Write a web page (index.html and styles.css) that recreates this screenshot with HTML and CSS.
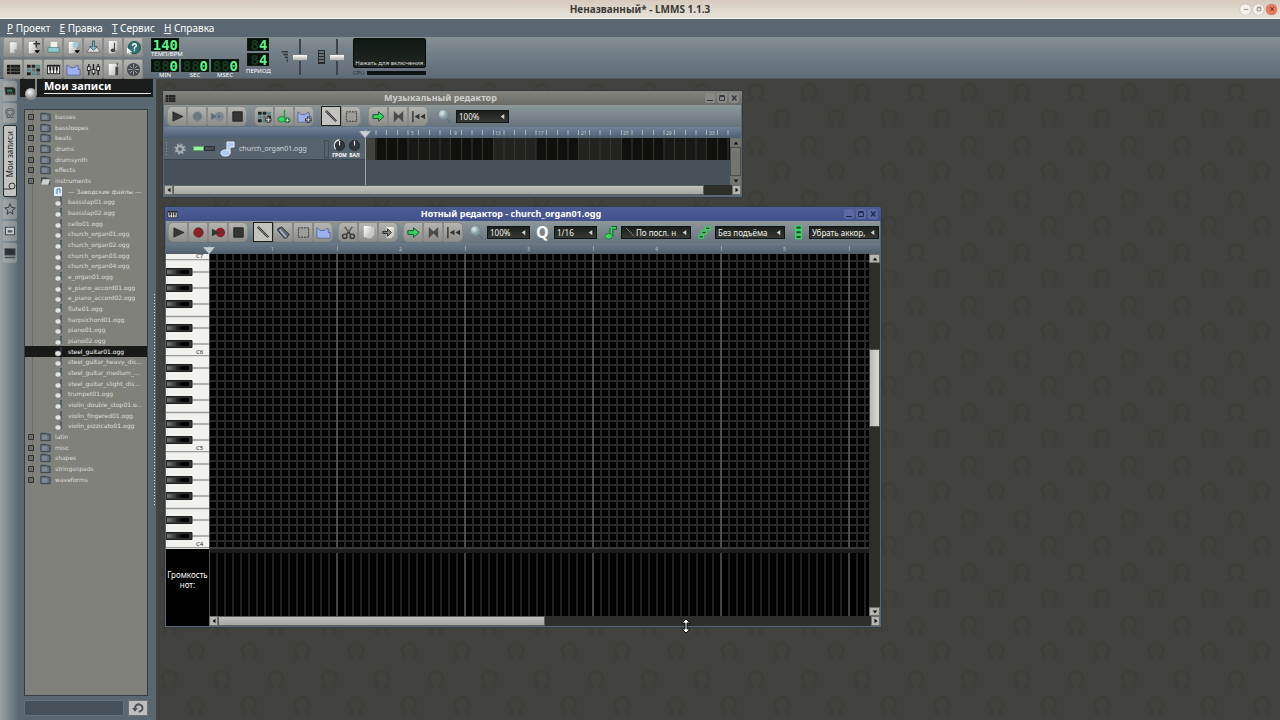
FILE: index.html
```html
<!DOCTYPE html>
<html lang="ru">
<head>
<meta charset="utf-8">
<title>Неназванный* - LMMS 1.1.3</title>
<link rel="stylesheet" href="styles.css">
</head>
<body>
<svg class="defs" aria-hidden="true">
  <defs>
    <linearGradient id="gPage" x1="0" y1="0" x2="1" y2="1"><stop offset="0" stop-color="#fff"/><stop offset="1" stop-color="#b9bab4"/></linearGradient>
    <linearGradient id="gKey"><stop offset="0" stop-color="#777"/><stop offset=".7" stop-color="#000"/></linearGradient>
    <radialGradient id="gLens" cx=".35" cy=".35"><stop offset="0" stop-color="#e4efee"/><stop offset="1" stop-color="#7d979d"/></radialGradient>
    <radialGradient id="gHead" cx=".4" cy=".35"><stop offset="0" stop-color="#fff"/><stop offset="1" stop-color="#8b8c8c"/></radialGradient>
    <symbol id="page" viewBox="0 0 16 16"><path d="M4 2h8v8l-3 4H4z" fill="url(#gPage)" stroke="#8b8c87" stroke-width=".5"/><path d="M12 10H9v4z" fill="#999"/></symbol>
    <symbol id="pageplus" viewBox="0 0 16 16"><path d="M3 2h8v8l-3 4H3z" fill="url(#gPage)"/><path d="M11 1v7M8 4h7" stroke="#333" stroke-width="1.6"/><path d="M9 11h6l-3 3z" fill="#000"/></symbol>
    <symbol id="open" viewBox="0 0 16 16"><path d="M5 2h7v8H5z" fill="#f1f1ee"/><path d="M2 8h12v5H2z" fill="#8fc9c9" stroke="#46777a" stroke-width=".7"/></symbol>
    <symbol id="recent" viewBox="0 0 16 16"><path d="M3 2h8v8l-3 4H3z" fill="url(#gPage)"/><circle cx="10" cy="5" r="3" fill="#9dd0d5"/><path d="M9 11h6l-3 3z" fill="#000"/></symbol>
    <symbol id="save" viewBox="0 0 16 16"><path d="M4 8h8l3 5H1z" fill="#ddd" stroke="#555" stroke-width=".7"/><path d="M7 1h2v6h3l-4 4-4-4h3z" fill="#8ab4c6" stroke="#24536a" stroke-width=".8"/></symbol>
    <symbol id="exportp" viewBox="0 0 16 16"><path d="M3 1h9v9l-3 4H3z" fill="url(#gPage)"/><path d="M9 3v8" stroke="#333"/><ellipse cx="7.500" cy="11" rx="2.500" ry="2" fill="#444"/></symbol>
    <symbol id="help" viewBox="0 0 16 16"><circle cx="9" cy="8" r="6.500" fill="#2b7272" stroke="#174a4b"/><path d="M7 6q0-2 2-2t2 2q0 1-2 2v2M9 11v1" fill="none" stroke="#fff" stroke-width="1.500"/><path d="M1 8v7l2-2 1 3 1-1-1-2h3z" fill="#fff"/></symbol>
    <symbol id="song" viewBox="0 0 16 16"><path d="M1 3h14v10H1z" fill="#171817"/><path d="M1 6.500h14M1 10h14M5 3v10" stroke="#767975" stroke-width=".8"/><path d="M9 3v10M12 3v10" stroke="#3e413f" stroke-width=".6"/></symbol>
    <symbol id="bb" viewBox="0 0 16 16"><g fill="#202223"><path d="M1 3h4v3H1zM6 3h4v3H6zM11 7h4v3h-4zM1 11h4v3H1z"/></g><g fill="#4d8d8e"><path d="M11 3h4v3h-4zM1 7h4v3H1zM6 11h4v3H6z"/></g><path d="M6 7h4v3H6zM11 11h4v3h-4z" fill="#687171"/></symbol>
    <symbol id="bbplus" viewBox="0 0 16 16"><use href="#bb"/><path d="M12 8v7M8.500 11.500h7" stroke="#333" stroke-width="3"/><path d="M12 9v5M9.500 11.500h5" stroke="#ddd" stroke-width="1.200"/></symbol>
    <symbol id="piano" viewBox="0 0 16 16"><path d="M1 3h14v10H1z" fill="#222"/><path d="M2 5h12v7H2z" fill="#eee"/><path d="M4.500 5v7M8 5v7M11.500 5v7" stroke="#222"/><path d="M4.500 5v4M8 5v4M11.500 5v4" stroke="#222" stroke-width="2"/></symbol>
    <symbol id="auto" viewBox="0 0 16 16"><path d="M1 3l4 3h4l2-2h2v4h2v6H1z" fill="#a0b0ee" stroke="#4a5c9c" stroke-width=".8"/></symbol>
    <symbol id="autoplus" viewBox="0 0 16 16"><use href="#auto"/><path d="M12 8v7M8.500 11.500h7" stroke="#333" stroke-width="3"/><path d="M12 9v5M9.500 11.500h5" stroke="#ddd"/></symbol>
    <symbol id="mixer" viewBox="0 0 16 16"><path d="M3 2v12M8 2v12M13 2v12" stroke="#222" stroke-width="1.500"/><g fill="#eee" stroke="#222"><rect x="1.500" y="5" width="3" height="4"/><rect x="6.500" y="8" width="3" height="4"/><rect x="11.500" y="5" width="3" height="4"/></g></symbol>
    <symbol id="notes" viewBox="0 0 16 16"><path d="M3 2h9v9l-3 3H3z" fill="url(#gPage)"/><path d="M12 1v3" stroke="#333"/><path d="M10 5h3v9h-3z" fill="#444"/></symbol>
    <symbol id="rack" viewBox="0 0 16 16"><circle cx="8" cy="8" r="7" fill="#464a51"/><path d="M8 2v12M2 8h12M4 4l8 8M12 4l-8 8" stroke="#b4b8bd" stroke-width=".8"/><circle cx="8" cy="8" r="2" fill="#555a60"/></symbol>
    <symbol id="play" viewBox="0 0 16 16"><path d="M3 3l11 5-11 5z" fill="#363836" stroke="#191a19" stroke-width=".6"/></symbol>
    <symbol id="rec" viewBox="0 0 16 16"><circle cx="8" cy="8" r="5" fill="#8d1f2a" stroke="#551018" stroke-width=".7"/></symbol>
    <symbol id="recoff" viewBox="0 0 16 16"><circle cx="8" cy="8" r="5" fill="#6c7783" stroke="#84909a"/></symbol>
    <symbol id="recplay" viewBox="0 0 16 16"><circle cx="10" cy="8" r="5" fill="#8d1f2a"/><path d="M1 4l8 4-8 4z" fill="#343634"/></symbol>
    <symbol id="recplayoff" viewBox="0 0 16 16"><circle cx="10" cy="8" r="5" fill="#7c8896"/><path d="M1 4l7 4-7 4zM8 5l5 3-5 3z" fill="#5d6b79" stroke="#8d99a5" stroke-width=".5"/></symbol>
    <symbol id="stop" viewBox="0 0 16 16"><path d="M3 3h10v10H3z" fill="#353735" stroke="#1f201f"/></symbol>
    <symbol id="draw" viewBox="0 0 16 16"><path d="M2 2l11 11" stroke="#333" stroke-width="2.400"/><path d="M2 2l11 11" stroke="#999" stroke-width=".8"/></symbol>
    <symbol id="erase" viewBox="0 0 16 16"><path d="M2 4l4-2 8 8-3 4H9L2 6z" fill="#646a76" stroke="#23262c"/><path d="M4 5l7 8" stroke="#b3bac8" stroke-width="1.500"/></symbol>
    <symbol id="select" viewBox="0 0 16 16"><path d="M2.500 3h11v10h-11z" fill="#9d9e98" stroke="#333" stroke-dasharray="2 1"/></symbol>
    <symbol id="cut" viewBox="0 0 16 16"><path d="M4 2l6 8M12 2L6 10" stroke="#333" stroke-width="1.600"/><path d="M4 2l4 5M12 2L8 7" stroke="#ccc" stroke-width=".5"/><g fill="none" stroke="#333" stroke-width="1.500"><circle cx="4" cy="12" r="2.300"/><circle cx="12" cy="12" r="2.300"/></g></symbol>
    <symbol id="copy" viewBox="0 0 16 16"><path d="M6 2h8v8l-3 4H6z" fill="#c9c9c3"/><path d="M3 1h8v8l-3 4H3z" fill="url(#gPage)"/></symbol>
    <symbol id="paste" viewBox="0 0 16 16"><path d="M6 2h8v9l-3 3H6z" fill="url(#gPage)"/><path d="M2 7h5V4l4 4-4 4V9H2z" fill="#888" stroke="#222"/></symbol>
    <symbol id="arrow" viewBox="0 0 16 16"><path d="M2 6h6V3l6 5-6 5v-3H2z" fill="#39d25b" stroke="#115525"/></symbol>
    <symbol id="loop" viewBox="0 0 16 16"><path d="M3 2l5 5 5-5v12L8 9l-5 5z" fill="#4b4d4a"/></symbol>
    <symbol id="rewind" viewBox="0 0 16 16"><path d="M2 2v12" stroke="#333" stroke-width="1.500"/><path d="M9 5v6L4 8zM15 5v6l-5-3z" fill="#333"/></symbol>
    <symbol id="lens" viewBox="0 0 16 16"><path d="M10 10l5 5" stroke="#64727a" stroke-width="2"/><circle cx="7" cy="6" r="5.500" fill="url(#gLens)" stroke="#6b8388" stroke-width=".6"/></symbol>
    <symbol id="greennote" viewBox="0 0 16 16"><path d="M9 3v9M9 3h6" stroke="#155c29" stroke-width="4"/><path d="M9 3v9M8 3h6" stroke="#35d95e" stroke-width="2"/><ellipse cx="6" cy="12" rx="4" ry="3" fill="#35d95e" stroke="#155c29" stroke-width=".7"/></symbol>
    <symbol id="noteplus" viewBox="0 0 16 16"><path d="M8 1v10" stroke="#1c9e3d" stroke-width="1.500"/><ellipse cx="5" cy="11" rx="4" ry="3" fill="#35d95e" stroke="#155c29" stroke-width=".7"/><path d="M11 9v6M8 12h6" stroke="#263" stroke-width="3"/><path d="M11 10v4M9 12h4" stroke="#bfc"/></symbol>
    <symbol id="scale" viewBox="0 0 16 16"><g fill="#18441f" stroke="#3bd765" stroke-width="1.400"><rect x="2" y="11" width="5" height="3"/><rect x="5" y="6.500" width="5" height="3"/><rect x="9" y="2" width="5" height="3"/></g></symbol>
    <symbol id="chord" viewBox="0 0 16 16"><g fill="#18441f" stroke="#3bd765" stroke-width="1.400"><rect x="5" y="1" width="6" height="3.500"/><rect x="5" y="6" width="6" height="3.500"/><rect x="5" y="11" width="6" height="3.500"/></g></symbol>
    <symbol id="bluenote" viewBox="0 0 16 16"><path d="M7 12V1h7v5h-4v6" fill="#a9c9f2" stroke="#eaf3ff"/><ellipse cx="5.500" cy="12" rx="4.500" ry="3" fill="#a9c9f2" stroke="#eaf3ff"/></symbol>
    <symbol id="gear" viewBox="0 0 16 16"><circle cx="8" cy="8" r="6" fill="none" stroke="#9ba4a9" stroke-width="3" stroke-dasharray="2.500 2.200"/><circle cx="8" cy="8" r="4" fill="none" stroke="#a7afb3" stroke-width="3"/></symbol>
    <symbol id="folder" viewBox="0 0 12 10"><path d="M1 1h6l1 1h3v7H1z" fill="#63707c" stroke="#333f49"/><path d="M2 3h6v5H2z" fill="#7e8994"/></symbol>
    <symbol id="folderopen" viewBox="0 0 12 10"><path d="M1 1h6l1 1h3v7H1z" fill="#424d56"/><path d="M3 3h8L9 9H1z" fill="#cfd1cf"/></symbol>
    <symbol id="sample" viewBox="0 0 8 10"><path d="M7 0v8" stroke="#384556" stroke-width="1.200"/><ellipse cx="4" cy="6.500" rx="3" ry="2.700" fill="#e2e2de" stroke="#555f67" stroke-width=".5"/></symbol>
    <symbol id="factory" viewBox="0 0 8 10"><path d="M1 0h7v9H0V2z" fill="#dfe9f5"/><path d="M3 7V2h3v4" fill="none" stroke="#477cae"/></symbol>
    <symbol id="plus" viewBox="0 0 8 8"><path d="M1.500 1.500h5v5h-5z" fill="#70716c" stroke="#2d3034"/><path d="M3 4h2" stroke="#444" stroke-width=".5"/></symbol>
    <symbol id="bignote" viewBox="0 0 16 22"><path d="M13 0v15" stroke="#a9a9a7" stroke-width="1.500"/><ellipse cx="8" cy="15" rx="6" ry="6" fill="url(#gHead)"/></symbol>
    <symbol id="omega" viewBox="0 0 16 16"><path d="M3 13h3v-2Q3 9 3 7q0-4 5-4t5 4q0 2-3 4v2h3" fill="none" stroke="#4e555b" stroke-width="3"/><path d="M3 13h3v-2Q3 9 3 7q0-4 5-4t5 4q0 2-3 4v2h3" fill="none" stroke="#a5abae" stroke-width="1"/></symbol>
    <symbol id="star" viewBox="0 0 16 16"><path d="M8 1l2 5 5 .5-4 3.500 1 5-4-3-4 3 1-5-4-3.500L6 6z" fill="#959ba0" stroke="#353b40" stroke-width="1.300"/></symbol>
    <symbol id="home" viewBox="0 0 16 16"><path d="M2 3h12v10H2z" fill="#c8cccc" stroke="#434c53" stroke-width="1.500"/><path d="M5 10V7h6v3z" fill="#4f5c66"/></symbol>
    <symbol id="computer" viewBox="0 0 16 16"><path d="M1 2h14v9H1z" fill="#2c3136" stroke="#555e64"/><path d="M1 13h14v2H1z" fill="#454c51"/></symbol>
    <symbol id="plugin" viewBox="0 0 16 16"><path d="M1 3h11l3 2v8H2z" fill="#202422" stroke="#555"/><path d="M4 6h7v3H4z" fill="#36795a"/><path d="M5 11h1M8 11h1M11 11h1" stroke="#ccc"/></symbol>
    <symbol id="reload" viewBox="0 0 16 16"><path d="M4 8q1-5 5-5 5 1 5 5t-5 5" fill="none" stroke="#4c5257" stroke-width="2.600"/><path d="M0 8h8l-4 5z" fill="#4c5257"/></symbol>
    <symbol id="winmin" viewBox="0 0 8 8"><path d="M1 6.500h6" stroke="currentColor"/></symbol>
    <symbol id="osmin" viewBox="0 0 8 8"><path d="M1 4.500h6" stroke="currentColor"/></symbol>
    <symbol id="winmax" viewBox="0 0 8 8"><path d="M1.500 2.500h5v4h-5zM1.500 1.500h5" fill="none" stroke="currentColor"/></symbol>
    <symbol id="winclose" viewBox="0 0 8 8"><path d="M2 1.500l4.500 5M6.500 1.500L2 6.500" stroke="currentColor" stroke-width="1.300"/></symbol>
    <symbol id="left" viewBox="0 0 8 8"><path d="M6 1v6L2 4z" fill="currentColor"/></symbol>
    <symbol id="right" viewBox="0 0 8 8"><path d="M2 1v6l4-3z" fill="currentColor"/></symbol>
    <symbol id="up" viewBox="0 0 8 8"><path d="M1 6h6L4 2z" fill="currentColor"/></symbol>
    <symbol id="down" viewBox="0 0 8 8"><path d="M1 2h6L4 6z" fill="currentColor"/></symbol>
    <symbol id="knob" viewBox="0 0 14 14"><circle cx="7" cy="7" r="5.500" fill="#30353a" stroke="#252a2e"/><path d="M7 7V2" stroke="#fff" stroke-width="1.200"/></symbol>
    <symbol id="knobset" viewBox="0 0 14 14"><use href="#knob"/><path d="M3 11a6 6 0 0 1 4-10" fill="none" stroke="#e5e8e9" stroke-width="1.200"/></symbol>
    <symbol id="head" viewBox="0 0 12 7"><path d="M0 0h12L6 7z" fill="#c9cfd1" stroke="#8b979d" stroke-width=".5"/></symbol>
  </defs>
</svg>

<header class="titlebar">
  <h1>Неназванный* - LMMS 1.1.3</h1>
  <div class="os-buttons">
    <button aria-label="Свернуть"><svg><use href="#osmin"/></svg></button>
    <button aria-label="Развернуть"><svg><use href="#winmax"/></svg></button>
    <button class="os-close" aria-label="Закрыть"><svg><use href="#winclose"/></svg></button>
  </div>
</header>
<nav class="menubar">
  <button><u>P</u> Проект</button><button><u>E</u> Правка</button><button><u>T</u> Сервис</button><button><u>H</u> Справка</button>
</nav>
<section class="toolbar">
  <div class="main-buttons">
    <button class="tool" aria-label="Создать"><svg><use href="#page"/></svg></button>
    <button class="tool" aria-label="Из шаблона"><svg><use href="#pageplus"/></svg></button>
    <button class="tool" aria-label="Открыть"><svg><use href="#open"/></svg></button>
    <button class="tool" aria-label="Недавние"><svg><use href="#recent"/></svg></button>
    <button class="tool" aria-label="Сохранить"><svg><use href="#save"/></svg></button>
    <button class="tool" aria-label="Экспорт"><svg><use href="#exportp"/></svg></button>
    <button class="tool" aria-label="Что это?"><svg><use href="#help"/></svg></button>
    <button class="tool" aria-label="Музыкальный редактор"><svg><use href="#song"/></svg></button>
    <button class="tool" aria-label="Ритм-басс"><svg><use href="#bb"/></svg></button>
    <button class="tool" aria-label="Нотный редактор"><svg><use href="#piano"/></svg></button>
    <button class="tool" aria-label="Автоматизация"><svg><use href="#auto"/></svg></button>
    <button class="tool" aria-label="Микшер"><svg><use href="#mixer"/></svg></button>
    <button class="tool" aria-label="Заметки"><svg><use href="#notes"/></svg></button>
    <button class="tool" aria-label="Контроллеры"><svg><use href="#rack"/></svg></button>
  </div>
  <div class="counters">
    <div class="counter tempo"><span class="lcd">140</span><span class="caption">ТЕМП/BPM</span></div>
    <div class="counter"><span class="lcd"><i>88</i>0</span><span class="caption">MIN</span></div>
    <div class="counter"><span class="lcd"><i>88</i>0</span><span class="caption">SEC</span></div>
    <div class="counter"><span class="lcd"><i>88</i>0</span><span class="caption">MSEC</span></div>
  </div>
  <div class="meter">
    <span class="lcd"><i>8</i>4</span><span class="lcd"><i>8</i>4</span><span class="caption">ПЕРИОД</span>
  </div>
  <label class="fader"><svg viewBox="0 0 8 14"><path d="M0 1h7v12z" fill="#363b3e"/><path d="M1 3h6M2 6h5M4 9h3" stroke="#a6acae" stroke-width=".7"/></svg><input type="range" value="50" aria-label="Громкость"></label>
  <label class="fader"><svg viewBox="0 0 8 14"><path d="M0 0h7v14H0z" fill="#272b2d"/><path d="M1 2h5M1 5h5M1 8h5M1 11h5" stroke="#b3b9bb"/></svg><input type="range" value="50" aria-label="Тональность"></label>
  <div class="scope">
    <button class="scope-screen">Нажать для включения</button>
    <div class="cpu"><span>CPU</span><span class="cpu-bar"></span></div>
  </div>
</section>

<main class="body">
  <nav class="tabs">
    <button aria-label="Инструменты"><svg><use href="#plugin"/></svg></button>
    <button aria-label="Мои проекты"><svg><use href="#omega"/></svg></button>
    <button class="tab-active"><span>Мои записи</span><svg viewBox="0 0 12 12"><path d="M0 10h7" stroke="#333"/><circle cx="8" cy="7" r="3" fill="none" stroke="#333"/></svg></button>
    <button aria-label="Мои предустановки"><svg><use href="#star"/></svg></button>
    <button aria-label="Домашний каталог"><svg><use href="#home"/></svg></button>
    <button aria-label="Компьютер"><svg><use href="#computer"/></svg></button>
  </nav>
  <aside class="panel">
    <h2><svg><use href="#bignote"/></svg><span>Мои записи</span></h2>
    <ul class="tree">
      <li><svg class="exp"><use href="#plus"/></svg><svg class="dir"><use href="#folder"/></svg>basses</li>
      <li><svg class="exp"><use href="#plus"/></svg><svg class="dir"><use href="#folder"/></svg>bassloopes</li>
      <li><svg class="exp"><use href="#plus"/></svg><svg class="dir"><use href="#folder"/></svg>beats</li>
      <li><svg class="exp"><use href="#plus"/></svg><svg class="dir"><use href="#folder"/></svg>drums</li>
      <li><svg class="exp"><use href="#plus"/></svg><svg class="dir"><use href="#folder"/></svg>drumsynth</li>
      <li><svg class="exp"><use href="#plus"/></svg><svg class="dir"><use href="#folder"/></svg>effects</li>
      <li><svg class="exp"><use href="#plus"/></svg><svg class="dir"><use href="#folderopen"/></svg>instruments</li>
      <li class="leaf"><svg><use href="#factory"/></svg><span>--- Заводские файлы ---</span></li>
      <li class="leaf"><svg><use href="#sample"/></svg><span>bassslap01.ogg</span></li>
      <li class="leaf"><svg><use href="#sample"/></svg><span>bassslap02.ogg</span></li>
      <li class="leaf"><svg><use href="#sample"/></svg><span>cello01.ogg</span></li>
      <li class="leaf"><svg><use href="#sample"/></svg><span>church_organ01.ogg</span></li>
      <li class="leaf"><svg><use href="#sample"/></svg><span>church_organ02.ogg</span></li>
      <li class="leaf"><svg><use href="#sample"/></svg><span>church_organ03.ogg</span></li>
      <li class="leaf"><svg><use href="#sample"/></svg><span>church_organ04.ogg</span></li>
      <li class="leaf"><svg><use href="#sample"/></svg><span>e_organ01.ogg</span></li>
      <li class="leaf"><svg><use href="#sample"/></svg><span>e_piano_accord01.ogg</span></li>
      <li class="leaf"><svg><use href="#sample"/></svg><span>e_piano_accord02.ogg</span></li>
      <li class="leaf"><svg><use href="#sample"/></svg><span>flute01.ogg</span></li>
      <li class="leaf"><svg><use href="#sample"/></svg><span>harpsichord01.ogg</span></li>
      <li class="leaf"><svg><use href="#sample"/></svg><span>piano01.ogg</span></li>
      <li class="leaf"><svg><use href="#sample"/></svg><span>piano02.ogg</span></li>
      <li class="leaf chosen"><svg><use href="#sample"/></svg><span>steel_guitar01.ogg</span></li>
      <li class="leaf"><svg><use href="#sample"/></svg><span>steel_guitar_heavy_dis...</span></li>
      <li class="leaf"><svg><use href="#sample"/></svg><span>steel_guitar_medium_...</span></li>
      <li class="leaf"><svg><use href="#sample"/></svg><span>steel_guitar_slight_dis...</span></li>
      <li class="leaf"><svg><use href="#sample"/></svg><span>trumpet01.ogg</span></li>
      <li class="leaf"><svg><use href="#sample"/></svg><span>violin_double_stop01.o...</span></li>
      <li class="leaf"><svg><use href="#sample"/></svg><span>violin_fingered01.ogg</span></li>
      <li class="leaf"><svg><use href="#sample"/></svg><span>violin_pizzicato01.ogg</span></li>
      <li><svg class="exp"><use href="#plus"/></svg><svg class="dir"><use href="#folder"/></svg>latin</li>
      <li><svg class="exp"><use href="#plus"/></svg><svg class="dir"><use href="#folder"/></svg>misc</li>
      <li><svg class="exp"><use href="#plus"/></svg><svg class="dir"><use href="#folder"/></svg>shapes</li>
      <li><svg class="exp"><use href="#plus"/></svg><svg class="dir"><use href="#folder"/></svg>stringsnpads</li>
      <li><svg class="exp"><use href="#plus"/></svg><svg class="dir"><use href="#folder"/></svg>waveforms</li>
    </ul>
    <div class="search"><input type="text" aria-label="Поиск"><button aria-label="Обновить"><svg><use href="#reload"/></svg></button></div>
  </aside>
  <div class="splitter"></div>

  <section class="desktop">
    <svg class="wallpaper" aria-hidden="true">
      <defs>
        <g id="arch"><path d="M-8 8h4v-3a7 7 0 1 1 8 0v3h4" fill="none" stroke="#3d3e39" stroke-width="3"/></g>
        <pattern id="wall" width="160" height="160" patternUnits="userSpaceOnUse">
          <g id="pair"><use href="#arch" x="12" y="13"/><use href="#arch" x="65" y="13"/><use href="#arch" x="119" y="13"/>
          <use href="#arch" x="39" y="39"/><use href="#arch" x="92" y="39"/><use href="#arch" x="145" y="39"/></g>
          <use href="#pair" y="53"/><use href="#pair" y="107"/>
        </pattern>
      </defs>
      <rect width="100%" height="100%" fill="url(#wall)"/>
    </svg>

    <article class="window song">
      <header class="win-title">
        <svg class="win-icon"><use href="#song"/></svg><h3>Музыкальный редактор</h3>
        <div class="win-buttons"><button aria-label="Свернуть"><svg><use href="#winmin"/></svg></button><button aria-label="Развернуть"><svg><use href="#winmax"/></svg></button><button aria-label="Закрыть"><svg><use href="#winclose"/></svg></button></div>
      </header>
      <div class="win-tools">
        <div class="group"><button class="tool" aria-label="Играть"><svg><use href="#play"/></svg></button><button class="tool" aria-label="Запись"><svg><use href="#recoff"/></svg></button><button class="tool" aria-label="Запись при игре"><svg><use href="#recplayoff"/></svg></button><button class="tool" aria-label="Стоп"><svg><use href="#stop"/></svg></button></div>
        <div class="group"><button class="tool" aria-label="Добавить ритм"><svg><use href="#bbplus"/></svg></button><button class="tool" aria-label="Добавить дорожку"><svg><use href="#noteplus"/></svg></button><button class="tool" aria-label="Добавить автоматизацию"><svg><use href="#autoplus"/></svg></button></div>
        <div class="group"><button class="tool pressed" aria-label="Рисовать"><svg><use href="#draw"/></svg></button><button class="tool" aria-label="Выделить"><svg><use href="#select"/></svg></button></div>
        <div class="group"><button class="tool" aria-label="Автопрокрутка"><svg><use href="#arrow"/></svg></button><button class="tool" aria-label="Петля"><svg><use href="#loop"/></svg></button><button class="tool" aria-label="В начало"><svg><use href="#rewind"/></svg></button></div>
        <label class="combo medium"><svg class="combo-icon"><use href="#lens"/></svg><span class="combo-box"><select aria-label="Масштаб"><option>100%</option></select><svg><use href="#left"/></svg></span></label>
      </div>
      <div class="song-time">
        <svg class="ruler" aria-hidden="true">
          <defs><pattern id="bars" width="32" height="10" patternUnits="userSpaceOnUse"><path d="M.5 3v5M11 3v5M21.500 3v5" stroke="#a9b5bf"/></pattern></defs>
          <rect width="100%" height="10" fill="url(#bars)"/>
          <g><text x="46" y="8">5</text><text x="89" y="8">9</text><text x="130" y="8">13</text><text x="173" y="8">17</text><text x="216" y="8">21</text><text x="258" y="8">25</text><text x="301" y="8">29</text><text x="344" y="8">33</text></g>
        </svg>
      </div>
      <div class="song-body">
        <div class="tracks">
          <div class="track">
            <div class="track-head">
              <span class="grip"></span><svg class="gear"><use href="#gear"/></svg>
              <span class="led led-on"></span><span class="led"></span>
              <svg class="note"><use href="#bluenote"/></svg><span class="track-name">church_organ01.ogg</span>
              <span class="activity"></span>
              <div class="knob"><svg><use href="#knobset"/></svg><span>ГРОМ</span></div>
              <div class="knob"><svg><use href="#knob"/></svg><span>БАЛ</span></div>
            </div>
            <svg class="track-bars" aria-hidden="true">
              <defs>
                <pattern id="groups" width="256" height="22" patternUnits="userSpaceOnUse">
                  <path d="M0 0h256v22H0z" fill="#10110d"/><path d="M128 0h43v22h-43zM213 0h43v22h-43z" fill="#23241f"/><path d="M43 0h42v22H43z" fill="#191a16"/>
                </pattern>
                <pattern id="cells" width="32" height="22" patternUnits="userSpaceOnUse"><path d="M.5 0v22M11 0v22M21.500 0v22" stroke="#33352f"/></pattern>
              </defs>
              <rect width="100%" height="22" fill="url(#groups)"/><rect width="100%" height="22" fill="url(#cells)"/><rect width="10" height="22" fill="#41433d"/>
            </svg>
          </div>
        </div>
        <div class="vscroll dim"><button aria-label="Вверх"><svg><use href="#up"/></svg></button><span class="vthumb"></span><button aria-label="Вниз"><svg><use href="#down"/></svg></button></div>
        <div class="playhead"><svg><use href="#head"/></svg></div>
      </div>
      <div class="hscroll"><button aria-label="Влево"><svg><use href="#left"/></svg></button><span class="htrack"><span class="hthumb" style="width:95%"></span></span><button aria-label="Вправо"><svg><use href="#right"/></svg></button></div>
    </article>

    <article class="window roll">
      <header class="win-title">
        <svg class="win-icon"><use href="#piano"/></svg><h3>Нотный редактор - church_organ01.ogg</h3>
        <div class="win-buttons"><button aria-label="Свернуть"><svg><use href="#winmin"/></svg></button><button aria-label="Развернуть"><svg><use href="#winmax"/></svg></button><button aria-label="Закрыть"><svg><use href="#winclose"/></svg></button></div>
      </header>
      <div class="win-tools">
        <div class="group"><button class="tool" aria-label="Играть"><svg><use href="#play"/></svg></button><button class="tool" aria-label="Запись"><svg><use href="#rec"/></svg></button><button class="tool" aria-label="Запись при игре"><svg><use href="#recplay"/></svg></button><button class="tool" aria-label="Стоп"><svg><use href="#stop"/></svg></button></div>
        <div class="group"><button class="tool pressed" aria-label="Рисовать"><svg><use href="#draw"/></svg></button><button class="tool" aria-label="Стереть"><svg><use href="#erase"/></svg></button><button class="tool" aria-label="Выделить"><svg><use href="#select"/></svg></button><button class="tool" aria-label="Подстройка"><svg><use href="#auto"/></svg></button></div>
        <div class="group"><button class="tool" aria-label="Вырезать"><svg><use href="#cut"/></svg></button><button class="tool" aria-label="Копировать"><svg><use href="#copy"/></svg></button><button class="tool" aria-label="Вставить"><svg><use href="#paste"/></svg></button></div>
        <div class="group"><button class="tool" aria-label="Автопрокрутка"><svg><use href="#arrow"/></svg></button><button class="tool" aria-label="Петля"><svg><use href="#loop"/></svg></button><button class="tool" aria-label="В начало"><svg><use href="#rewind"/></svg></button></div>
        <label class="combo"><svg class="combo-icon"><use href="#lens"/></svg><span class="combo-box"><select aria-label="Масштаб"><option>100%</option></select><svg><use href="#left"/></svg></span></label>
        <label class="combo"><span class="combo-icon quant">Q</span><span class="combo-box"><select aria-label="Квантование"><option>1/16</option></select><svg><use href="#left"/></svg></span></label>
        <label class="combo wide"><svg class="combo-icon"><use href="#greennote"/></svg><span class="combo-box with-icon"><svg viewBox="0 0 12 12"><path d="M1 1l10 10" stroke="#8c8f88"/></svg><select aria-label="Длина ноты"><option>По посл. н</option></select><svg><use href="#left"/></svg></span></label>
        <label class="combo wide"><svg class="combo-icon"><use href="#scale"/></svg><span class="combo-box"><select aria-label="Лад"><option>Без подъёма</option></select><svg><use href="#left"/></svg></span></label>
        <label class="combo wide"><svg class="combo-icon"><use href="#chord"/></svg><span class="combo-box"><select aria-label="Аккорд"><option>Убрать аккор,</option></select><svg><use href="#left"/></svg></span></label>
      </div>
      <div class="roll-time">
        <svg class="ruler" aria-hidden="true">
          <defs><pattern id="marks" width="128" height="10" patternUnits="userSpaceOnUse"><path d="M.5 3v5" stroke="#91a3a6"/></pattern></defs>
          <rect width="100%" height="10" fill="url(#marks)"/>
          <g><text x="62" y="8">1</text><text x="190" y="8">2</text><text x="318" y="8">3</text><text x="446" y="8">4</text><text x="574" y="8">5</text></g>
        </svg>
      </div>
      <div class="roll-body">
        <div class="keys-col">
          <svg class="keys" aria-hidden="true">
            <defs>
              <pattern id="octave" y="5" width="43" height="96" patternUnits="userSpaceOnUse">
                <path d="M0 0h43v96H0z" fill="#f1f1ee"/>
                <path d="M0 .5h43M0 13h43M0 29h43M0 45h43M0 57.500h43M0 69h43M0 85h43" stroke="#999" stroke-width="1.500"/>
                <g fill="#333" stroke="#222"><path d="M0 9.500h26v7H0zM0 25.500h26v7H0zM0 41.500h26v7H0zM0 65.500h26v7H0zM0 81.500h26v7H0z"/></g>
                <g fill="url(#gKey)"><rect x="1" y="11" width="22" height="4"/><rect x="1" y="27" width="22" height="4"/><rect x="1" y="43" width="22" height="4"/><rect x="1" y="67" width="22" height="4"/><rect x="1" y="83" width="22" height="4"/></g>
              </pattern>
            </defs>
            <rect width="43" height="100%" fill="url(#octave)"/>
            <g><text x="30" y="4">C7</text><text x="30" y="100">C6</text><text x="30" y="196">C5</text><text x="30" y="292">C4</text></g>
          </svg>
          <div class="volume-label">Громкость нот:</div>
        </div>
        <div class="grid"><div class="note-grid"></div><div class="divider"></div><div class="volume-grid"></div></div>
        <div class="vscroll"><button aria-label="Вверх"><svg><use href="#up"/></svg></button><span class="vspace before"></span><span class="vthumb"></span><span class="vspace after"></span><button aria-label="Вниз"><svg><use href="#down"/></svg></button></div>
        <div class="playhead"><svg><use href="#head"/></svg></div>
      </div>
      <div class="roll-foot"><div class="hscroll"><button aria-label="Влево"><svg><use href="#left"/></svg></button><span class="htrack"><span class="hthumb" style="width:50%"></span></span><button aria-label="Вправо"><svg><use href="#right"/></svg></button></div></div>
    </article>
    <svg class="cursor" viewBox="0 0 10 16" aria-hidden="true"><path d="M5 1l4 4H6v6h3l-4 4-4-4h3V5H1z" fill="#fff" stroke="#111"/></svg>
  </section>
</main>
</body>
</html>
```
FILE: styles.css
```css
* { box-sizing: border-box; }
html, body { height: 100%; }
body {
  margin: 0; display: flex; flex-direction: column; overflow: hidden;
  background: #5a6770; color: #fff;
  font-family: "Noto Sans", "Open Sans", sans-serif; font-size: 9px; line-height: 12px;
}
button { margin: 0; padding: 0; border: 0; background: none; color: inherit; font: inherit; }
h1, h2, h3, ul { margin: 0; padding: 0; font-size: inherit; }
svg { display: block; flex: none; }
.defs { position: absolute; width: 0; height: 0; }

.titlebar {
  flex: none; height: 19px; display: grid; grid-template-columns: 1fr auto 1fr; align-items: center;
  background: linear-gradient(#d5cabd, #e8e4da); border-bottom: 1px solid #f3f1ea; color: #3c3a37;
}
.titlebar h1 { grid-column: 2; font-size: 10px; font-weight: 700; }
.os-buttons { display: flex; gap: 2px; justify-content: flex-end; padding-right: 3px; }
.os-buttons button {
  width: 11px; height: 11px; border-radius: 50%; display: grid; place-items: center;
  background: #f4f1eb; box-shadow: 0 0 1px #8b8479; color: #77716a;
}
.os-buttons svg { width: 6px; height: 6px; }
.os-buttons .os-close { background: #e9795b; color: #5e2a1d; }

.menubar { flex: none; height: 18px; display: flex; align-items: center; gap: 9px; padding-left: 7px; background: #5a6770; font-size: 10px; }

.toolbar {
  flex: none; height: 42px; display: flex; align-items: flex-start; padding-left: 3px;
  background: linear-gradient(#849092, #737f87 40%, #606b76); border-bottom: 1px solid #4f5863;
}
.main-buttons { display: grid; grid-template-columns: repeat(7, 20px); grid-auto-rows: 20px; row-gap: 2px; }
.tool {
  width: 20px; height: 20px; display: grid; place-items: center;
  background: linear-gradient(#b4b5b0, #8d8e89); border: 1px solid #878a87; border-radius: 2px;
}
.tool svg { width: 15px; height: 15px; }
.pressed { background: #c4c4bf; border-color: #1d1e1e; border-radius: 0; }
.counters { display: grid; grid-template-columns: repeat(3, 28px); gap: 0 2px; margin: 1px 0 0 8px; }
.counter { display: flex; flex-direction: column; align-items: center; height: 21px; }
.tempo { grid-column: 1 / -1; align-items: flex-start; }
.caption { font-size: 6px; line-height: 7px; white-space: nowrap; }
.lcd {
  display: flex; justify-content: flex-end; width: 28px; height: 13px;
  background: #071109; border: 1px solid #101a12; color: #5df58a;
  font: 700 14px/12px "DejaVu Sans Mono", monospace;
}
.lcd i { font-style: normal; color: #18391f; }
.meter { display: flex; flex-direction: column; align-items: center; gap: 2px; margin: 1px 0 0 7px; }
.meter .lcd { width: 22px; padding-right: 1px; }
.fader { display: flex; align-items: center; height: 40px; gap: 3px; margin-left: 10px; }
.fader svg { width: 8px; height: 14px; }
.fader input {
  appearance: none; margin: 0; width: 16px; height: 36px; writing-mode: vertical-lr;
  background: linear-gradient(#3d454c, #3d454c) center / 2px 100% no-repeat;
}
.fader input::-webkit-slider-thumb { appearance: none; width: 16px; height: 7px; border: 1px solid #767b7e; border-radius: 1px; background: linear-gradient(#fff, #b0b1ae); }
.scope { margin: 1px 0 0 8px; width: 73px; }
.scope-screen {
  display: flex; align-items: flex-end; justify-content: center; width: 100%; height: 30px;
  border: 1px solid #070a08; border-radius: 2px; background: linear-gradient(#111914, #202722);
  font-size: 6px; line-height: 8px; white-space: nowrap; color: #d9dcd8;
}
.cpu { display: flex; align-items: center; gap: 2px; height: 9px; font-size: 6px; color: #262c30; }
.cpu-bar { flex: 1; height: 4px; background: #101313; }

.body { flex: 1; min-height: 0; display: flex; }
.tabs {
  flex: none; width: 19px; padding: 2px 0 0 3px; display: flex; flex-direction: column; gap: 2px;
  background: linear-gradient(90deg, #98a1a2, #7f8a90 40%, #59666f);
}
.tabs button {
  width: 14px; height: 20px; display: flex; align-items: center; justify-content: center;
  background: linear-gradient(90deg, #a3a7a7, #878c8c); border-radius: 2px;
}
.tabs svg { width: 12px; height: 12px; }
.tabs .tab-active {
  height: 72px; flex-direction: column; gap: 2px; background: #c4c5c2; border: 1px solid #292d30; color: #222; font-size: 8px;
}
.tab-active span { writing-mode: vertical-rl; transform: rotate(180deg); line-height: 10px; }
.panel { flex: none; width: 134px; display: flex; flex-direction: column; padding: 0 5px 4px; background: #5a6770; }
.panel h2 {
  display: flex; align-items: flex-start; gap: 5px; height: 18px; margin: 0 -5px 12px -4px; padding: 0 2px 0 3px;
  background: #1a1c1c; font-size: 11px; line-height: 13px;
}
.panel h2 svg { width: 16px; height: 22px; }
.panel h2 span { flex: 1; height: 15px; border-bottom: 1px solid #e8e8e8; }
.tree {
  flex: 1; list-style: none; overflow: hidden; padding-top: 1px;
  display: grid; align-content: start; grid-auto-rows: 11px 11px 10px;
  background: linear-gradient(#6d6e69, #6d6e69) 7px 0 / 1px 369px no-repeat, #80817b;
  border: 1px solid #353e45; font: 6px/10px "DejaVu Sans", sans-serif; color: #deded9;
}
.tree li { display: flex; align-items: center; white-space: nowrap; padding-left: 2px; }
.exp { width: 8px; height: 8px; margin-right: 5px; }
.dir { width: 11px; height: 10px; margin-right: 4px; }
.tree .leaf { padding-left: 29px; }
.leaf svg { width: 8px; height: 10px; margin-right: 6px; }
.tree .chosen { background: #181a18; color: #fff; }
.search { display: flex; justify-content: space-between; margin-top: 4px; }
.search input { width: 100px; height: 16px; border: 1px solid #63717b; border-radius: 2px; background: #465059; }
.search button { width: 20px; height: 16px; display: grid; place-items: center; background: #bfc0bd; border: 1px solid #6c7275; }
.search svg { width: 12px; height: 12px; }
.splitter { flex: none; width: 4px; background: repeating-linear-gradient(transparent 0 1px, #d3d8da 1px 2px, transparent 2px 3px) 1px 214px / 1px 213px no-repeat, #5a6770; border-right: 1px solid #3f4648; }

.desktop { flex: 1; position: relative; overflow: hidden; background: #41423d; }
.wallpaper { width: 100%; height: 100%; }
.window { position: absolute; display: flex; flex-direction: column; border: 1px solid #343c43; background: #5a6770; }
.song { left: 5px; top: 11px; width: 581px; height: 108px; padding: 0 1px 2px; }
.roll { left: 7px; top: 127px; width: 718px; height: 422px; padding: 0 1px 1px; }
.win-title { flex: none; height: 14px; display: grid; grid-template-columns: auto 1fr auto; align-items: center; margin: 0 -1px; padding: 0 3px 0 2px; font-size: 9px; text-align: center; }
.song .win-title { background: linear-gradient(#84847f, #6a6a66); color: #cfcfcb; }
.roll .win-title { background: linear-gradient(#4c5c94, #42518a); }
.win-icon { width: 11px; height: 11px; }
.win-buttons { display: flex; justify-content: flex-end; gap: 2px; }
.win-buttons button { width: 10px; height: 10px; display: grid; place-items: center; border-radius: 2px; background: #888984; color: #30343f; }
.roll .win-buttons button { background: #5a69a1; color: #202a52; }
.win-buttons svg { width: 8px; height: 8px; }
.win-tools { flex: none; height: 22px; display: flex; align-items: center; gap: 5px; padding-left: 2px; background: linear-gradient(#8c9899, #67737d); }
.song .win-tools { gap: 7px; padding-left: 3px; }
.group { display: flex; }
.group .tool:first-child { border-radius: 5px 0 0 5px; }
.group .tool:last-child { border-radius: 0 5px 5px 0; }
.group .pressed:first-child { border-radius: 0; }
.combo { display: flex; align-items: center; gap: 3px; margin-left: 1px; }
.combo-icon { width: 15px; height: 15px; }
.medium .combo-icon { width: 17px; }
.quant { font: 700 16px/15px "Noto Sans", sans-serif; }
.combo-box { width: 43px; height: 13px; display: flex; align-items: center; padding: 0 2px; background: linear-gradient(#1c1e1c, #363833); border: 1px solid #131514; }
.medium .combo-box { width: 53px; }
.wide .combo-box { width: 70px; }
.combo-box select { appearance: none; flex: 1; min-width: 0; padding: 0; border: 0; background: none; color: #f2f2ee; font: 8px/11px "Noto Sans", sans-serif; }
.combo-box svg { width: 7px; height: 7px; color: #d3d3ce; }
.combo-box.with-icon svg:first-child { width: 12px; height: 10px; }

.ruler { width: 100%; height: 10px; }
.ruler text { font: 5px "Noto Sans", sans-serif; fill: #c3ccd2; }
.song-time, .roll-time { flex: none; height: 11px; background: linear-gradient(#708399, #4d5e71); }
.song-time { padding: 0 10px 0 201px; }
.roll-time { padding: 0 10px 0 43px; background: linear-gradient(#6b7a87, #525f6b); }
.song-body { flex: 1; min-height: 0; display: flex; position: relative; }
.tracks { flex: 1; background: #47515a; }
.track { display: flex; height: 22px; border-bottom: 1px solid #3b454d; }
.track-head { flex: none; width: 201px; display: flex; align-items: center; padding-left: 1px; background: #56636d; }
.grip { width: 4px; height: 16px; margin-right: 5px; background: radial-gradient(#8b969d 1px, transparent 1px) 0 0 / 3px 3px; }
.gear { width: 12px; height: 12px; margin-right: 7px; }
.led { width: 11px; height: 5px; border: 1px solid #2b3034; background: #454b50; }
.led-on { background: #9af5a0; border-color: #62a568; }
.note { width: 16px; height: 16px; margin: 0 3px 0 5px; }
.track-name { flex: 1; font-size: 7px; color: #d0d5d8; }
.activity { width: 5px; height: 18px; margin-right: 3px; border: 1px solid #434d55; }
.knob { width: 15px; display: flex; flex-direction: column; align-items: center; }
.knob:last-child { margin-right: 3px; }
.knob svg { width: 13px; height: 13px; }
.knob span { font-size: 5px; line-height: 6px; font-weight: 700; }
.track-bars { flex: 1; min-width: 0; height: 22px; }
.playhead { position: absolute; top: 0; bottom: 0; width: 1px; background: #9aa4a9; }
.song .playhead { left: 201px; }
.roll .playhead { left: 43px; background: #4b4e4e; }
.playhead svg { position: absolute; left: -6px; top: -7px; width: 12px; height: 7px; }

.hscroll, .vscroll { flex: none; display: flex; background: #2e2f2b; }
.hscroll { height: 10px; }
.vscroll { width: 11px; flex-direction: column; }
.hscroll button, .vscroll button { width: 9px; height: 9px; display: grid; place-items: center; background: #b5b6b1; border: 1px solid #6f706c; color: #111; }
.hscroll svg, .vscroll svg { width: 6px; height: 6px; }
.vscroll button { width: 100%; }
.hscroll button { height: 100%; }
.htrack { flex: 1; }
.hthumb { display: block; height: 100%; background: linear-gradient(#c1c2bd, #a5a6a1); border: 1px solid #5f605c; }
.vthumb { flex: 1; background: linear-gradient(90deg, #b9bab5, #dadbd7); border: 1px solid #4f504c; }
.dim .vthumb, .dim button { background: #747570; }

.roll-body { flex: 1; min-height: 0; display: flex; position: relative; background: #000; }
.keys-col { flex: none; width: 43px; display: flex; flex-direction: column; }
.keys { width: 43px; height: 295px; }
.keys text { font: 6px "Noto Sans", sans-serif; fill: #222; }
.volume-label { flex: 1; display: flex; align-items: center; justify-content: center; padding-bottom: 6px; text-align: center; font-size: 8px; line-height: 10px; }
.grid { flex: 1; display: flex; flex-direction: column; }
.note-grid {
  height: 293px;
  background:
    linear-gradient(90deg, #4c4c4c 2px, transparent 2px) -1px 0 / 128px 100%,
    linear-gradient(90deg, #282828 2px, transparent 2px) -1px 0 / 8px 100%,
    linear-gradient(#282828 2px, transparent 2px) 0 6px / 100% 8px;
}
.divider { height: 6px; background: #1d1d1d; border-top: 2px solid #3b3b3b; }
.volume-grid {
  flex: 1;
  background:
    linear-gradient(90deg, #444 2px, transparent 2px) -1px 0 / 128px 100%,
    linear-gradient(90deg, #202020 2px, transparent 2px) -1px 0 / 8px 100%;
}
.roll .vspace.before { flex: 86; }
.roll .vthumb { flex: 77; }
.roll .vspace.after { flex: 181; }
.roll-foot { flex: none; padding-left: 43px; background: #000; }
.cursor { position: absolute; left: 524px; top: 539px; width: 10px; height: 16px; }
```
